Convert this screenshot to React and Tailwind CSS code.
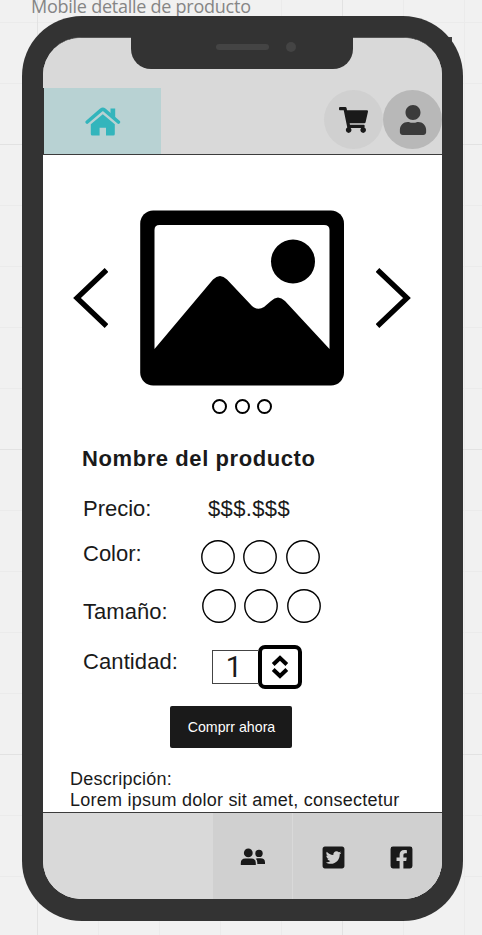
import React from "react";
import { FaShoppingCart, FaUser, FaTwitterSquare, FaFacebookSquare } from "react-icons/fa";

function HomeIcon() {
  return (
    <svg width="36" height="30" viewBox="0 0 36 30" className="text-[#33b5bc]">
      <path d="M25.500 9 V1.500 H30.200 V12 L25.500 8 Z" fill="currentColor" />
      <path
        d="M2.200 15 L16.300 2.900 Q17.800 1.700 19.300 2.900 L33.400 15"
        fill="none"
        stroke="currentColor"
        strokeWidth="3.600"
        strokeLinecap="round"
        strokeLinejoin="round"
      />
      <path
        d="M17.800 7.200 L29.800 17.200 V27 Q29.800 28.500 28.300 28.500 H21 V20.800 H14.600 V28.500 H7.300 Q5.800 28.500 5.800 27 V17.200 Z"
        fill="currentColor"
      />
    </svg>
  );
}

function PeopleIcon() {
  return (
    <svg width="26" height="18" viewBox="0 0 26 18" fill="#1a1a1a">
      <circle cx="8.300" cy="4.900" r="4.400" />
      <circle cx="19" cy="5.400" r="3.700" />
      <path d="M0.800 17 V15 Q0.800 10.500 5.300 10.500 H11.300 Q15.800 10.500 15.800 15 V17 Z" />
      <path d="M17.300 16 V14.500 Q17.300 12 15.800 10.800 Q16.400 10.300 17.600 10.300 H20.500 Q25 10.300 25 14.500 V16 Z" />
    </svg>
  );
}

function Arrow({ flip }) {
  return (
    <svg width="36" height="62" viewBox="0 0 36 62" className={flip ? "-scale-x-100" : ""}>
      <path d="M34.500 3 L5 31 L34.500 59" fill="none" stroke="#000" strokeWidth="5.300" />
    </svg>
  );
}

function Picture() {
  return (
    <svg width="204" height="176" viewBox="0 0 204 176">
      <rect x="0.200" y="0.500" width="203.800" height="175" rx="13" fill="#000" />
      <path
        d="M14.500 139 V20 Q14.500 15 19.500 15 H184 Q189.500 15 189.500 20 V139 L145 91 Q138 84 131 91 L124 97 Q118 101 112 96 L87 69.500 Q80 62.500 73 69.500 Z"
        fill="#fff"
      />
      <circle cx="153" cy="51.500" r="22" fill="#000" />
    </svg>
  );
}

function Swatch({ className }) {
  return (
    <svg width="34" height="34" viewBox="0 0 34 34" className={className}>
      <circle cx="17" cy="17" r="16.200" fill="none" stroke="#000" strokeWidth="1.400" />
    </svg>
  );
}

function Swatches() {
  return (
    <div className="flex">
      <Swatch className="" />
      <Swatch className="ml-[7.800px]" />
      <Swatch className="ml-[9.700px]" />
    </div>
  );
}

function Header() {
  return (
    <header className="flex h-[117px] shrink-0 items-end justify-between border-b border-[#3c3c3c] bg-[#d9d9d9]">
      <div className="flex h-[66px] w-[118px] items-center justify-center border-l border-[#333] bg-[#b8d2d3] pt-[2px]">
        <HomeIcon />
      </div>
      <div className="flex pb-[5px]">
        <div className="flex h-[59px] w-[59px] items-center justify-center rounded-full bg-[#d0d0d0]">
          <FaShoppingCart className="h-[28px] w-[29px] text-[#1a1a1a]" />
        </div>
        <div className="flex h-[59px] w-[59px] items-center justify-center rounded-full bg-[#b8b8b8]">
          <FaUser className="h-[30px] w-[30px] text-[#3b3b3b]" />
        </div>
      </div>
    </header>
  );
}

function Footer() {
  return (
    <footer className="flex h-[87px] shrink-0 border-t border-[#3c3c3c] bg-[#d9d9d9]">
      <div className="w-[170px]" />
      <div className="flex w-[79px] items-center justify-center bg-[#d0d0d0] pt-[2px]">
        <PeopleIcon />
      </div>
      <div className="flex grow items-center border-l border-[#d9d9d9] bg-[#d0d0d0] pl-[28px] pt-[2px]">
        <FaTwitterSquare className="h-[25px] w-[25px] text-[#1a1a1a]" />
        <FaFacebookSquare className="ml-[43px] h-[25px] w-[25px] text-[#1a1a1a]" />
      </div>
    </footer>
  );
}

export default function App() {
  return (
    <div className="relative h-[935px] w-[482px] overflow-hidden bg-[#f1f1f1] font-['Liberation_Sans',Arial,sans-serif] text-[#1a1a1a]">
      <div className="absolute inset-0 bg-[linear-gradient(to_right,#ebebeb_1px,transparent_1px),linear-gradient(to_bottom,#ebebeb_1px,transparent_1px)] bg-[length:61px_61px] bg-[position:37px_22px]" />
      <div className="absolute inset-0 bg-[linear-gradient(to_right,#e2e2e2_1px,transparent_1px),linear-gradient(to_bottom,#e2e2e2_1px,transparent_1px)] bg-[length:305px_305px] bg-[position:37px_144px]" />
      <div className="absolute left-[31px] top-[-6px] whitespace-nowrap font-['Open_Sans',sans-serif] text-[18px] leading-[24px] tracking-[-0.25px] text-[#858585]">
        Mobile detalle de producto
      </div>
      <div className="absolute left-[446px] top-[37px] h-[10px] w-[6px] bg-[#444]" />

      <div className="relative ml-[22px] pt-[16px]">
        <div className="flex h-[905px] w-[441px] rounded-[60px] bg-[#333] px-[21px] pb-[22px] pt-[21px]">
          <div className="flex grow flex-col overflow-hidden rounded-[38px] border-t border-[#555] bg-white">
            <Header />
            <main className="flex min-h-0 grow flex-col overflow-hidden">
              <div className="mt-[54px] flex h-[178px] items-center justify-between pl-[29px] pr-[30px]">
                <Arrow />
                <Picture />
                <Arrow flip />
              </div>
              <div className="mt-[12px] flex gap-[7.500px] pl-[169px]">
                <span className="h-[15px] w-[15px] rounded-full border-2 border-black" />
                <span className="h-[15px] w-[15px] rounded-full border-2 border-black" />
                <span className="h-[15px] w-[15px] rounded-full border-2 border-black" />
              </div>
              <h1 className="mt-[32px] whitespace-nowrap pl-[39px] text-[22px] font-bold leading-[26px] tracking-[0.58px]">
                Nombre del producto
              </h1>
              <div className="mt-[24px] flex h-[26px] pl-[40px] text-[22px] leading-[26px]">
                <span className="w-[125px]">Precio:</span>
                <span className="tracking-[0.35px]">$$$.$$$</span>
              </div>
              <div className="mt-[18px] flex h-[34px] pl-[40px] text-[22px] leading-[26px]">
                <span className="w-[118px] pt-[1px]">Color:</span>
                <Swatches />
              </div>
              <div className="mt-[15px] flex h-[34px] pl-[40px] text-[22px] leading-[26px]">
                <span className="w-[119px] pt-[10px] tracking-[0.05px]">Tamaño:</span>
                <Swatches />
              </div>
              <div className="mt-[22px] flex h-[44px] pl-[40px] text-[22px] leading-[26px]">
                <span className="w-[129px] pt-[4px] tracking-[0.1px]">Cantidad:</span>
                <div className="mt-[5px] flex h-[34px] w-[46px] items-center justify-center border border-r-0 border-[#444] font-[Roboto,sans-serif] text-[29px] leading-[32px]">
                  <span className="pr-[3px]">1</span>
                </div>
                <div className="flex h-[44px] w-[44px] items-center justify-center rounded-[7px] border-4 border-black">
                  <svg width="18" height="26" viewBox="0 0 18 26" fill="none" stroke="#000" strokeWidth="4">
                    <path d="M2.200 10.500 L9 4 L15.800 10.500 M2.200 15.500 L9 22 L15.800 15.500" />
                  </svg>
                </div>
              </div>
              <button className="ml-[127px] mt-[17px] h-[42px] w-[122px] shrink-0 rounded-[2px] bg-[#1a1a1a] pl-[1px] pt-[2px] text-[14.200px] text-white">
                Comprr ahora
              </button>
              <p className="mt-[21px] whitespace-nowrap pl-[27px] text-[18px] leading-[21px] tracking-[0.240px]">
                Descripción:
                <br />
                Lorem ipsum dolor sit amet, consectetur
              </p>
            </main>
            <Footer />
          </div>
        </div>
      </div>

      <div className="absolute left-[131px] top-[36px] flex h-[33px] w-[222px] justify-center rounded-b-[20px] bg-[#333] pt-[8px]">
        <span className="h-[6px] w-[53px] rounded-full bg-[#444]" />
        <span className="absolute left-[155px] top-[6px] h-[10px] w-[10px] rounded-full bg-[#444]" />
      </div>
    </div>
  );
}
